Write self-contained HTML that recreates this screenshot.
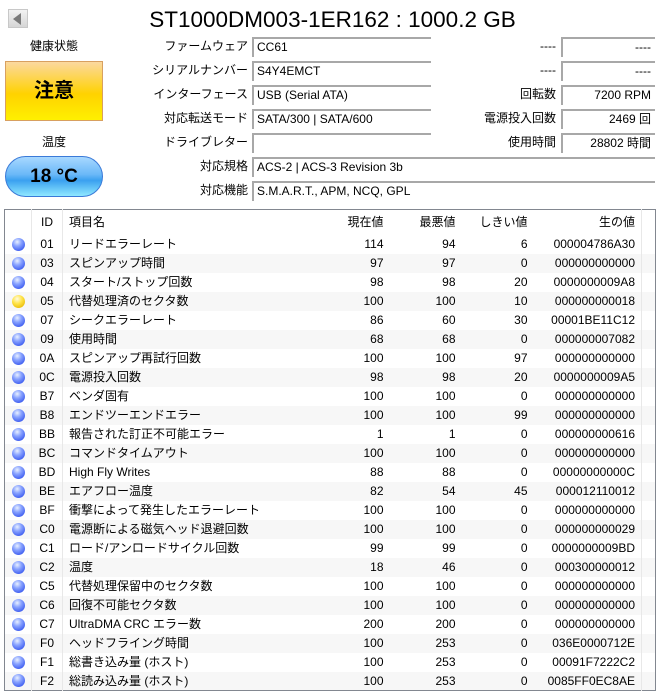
<!DOCTYPE html><html><head><meta charset="utf-8"><style>
*{margin:0;padding:0;box-sizing:border-box}
body{width:661px;height:697px;background:#fff;font-family:"Liberation Sans","Noto Sans CJK JP",sans-serif;color:#000;position:relative;overflow:hidden;font-size:12px}
.a{position:absolute}
.lbl{position:absolute;text-align:right;font-size:12px;line-height:19px}
.box{position:absolute;height:20px;border-top:2px solid #a8a8a8;border-left:2px solid #a8a8a8;font-size:12px;line-height:17px;padding-left:3px;background:#fff}
.r{text-align:right;padding-right:4px}
table{position:absolute;left:4px;top:209px;width:652px;border:1px solid #828790;border-collapse:collapse;font-size:12px}
td{height:19px;line-height:18px;padding:0;white-space:nowrap}
tr:nth-child(odd) td{background:#f7f7f7}
tr.h td{height:25px;background:#fff}
td.c1{width:27px;border-right:1px solid #e8e8e8}
td.c2{width:31px;border-right:1px solid #e8e8e8;text-align:center}
td.c3{padding-left:6px}
td.n{text-align:right;width:72px}
td.rw{text-align:right;width:114px;padding-right:6px;border-right:1px solid #e8e8e8}
td.e{width:14px}
.dot{display:block;width:13px;height:13px;border-radius:50%;margin-left:7px;background:radial-gradient(circle at 40% 30%,#e8f0ff 0,#8aa4ff 35%,#3d5cf0 80%,#2a3fd0 100%)}
.y{background:radial-gradient(circle at 40% 30%,#fffbe0 0,#ffe44a 40%,#e8b800 85%,#c89a00 100%)}
</style></head><body>
<div class="a" style="left:8px;top:9px;width:20px;height:19px;background:linear-gradient(#f2f2f2,#d6d6d6);border:1px solid #c8c8c8"></div>
<div class="a" style="left:13px;top:13px;width:0;height:0;border-top:6px solid transparent;border-bottom:6px solid transparent;border-right:8px solid #7a7a7a"></div>
<div class="a" style="left:0;width:661px;text-align:center;top:5px;font-size:22.5px;line-height:30px;padding-left:4px">ST1000DM003-1ER162 : 1000.2 GB</div>
<div class="a" style="left:5px;width:98px;text-align:center;top:37px;line-height:18px">健康状態</div>
<div class="a" style="left:5px;top:61px;width:98px;height:60px;border:1px solid #d8a060;background:linear-gradient(#fbd8a0 0,#ffd200 55%,#fff000 100%);text-align:center;font-size:20px;font-weight:bold;line-height:58px">注意</div>
<div class="a" style="left:5px;width:98px;text-align:center;top:133px;line-height:18px">温度</div>
<div class="a" style="left:5px;top:156px;width:98px;height:41px;border-radius:21px;border:1px solid #3a7ad8;background:linear-gradient(#a8d8ff 0,#6ab8f8 45%,#3aa0f0 60%,#8fe8ff 100%);text-align:center;font-size:19px;font-weight:bold;line-height:40px">18 °C</div>

<div class="lbl" style="left:120px;width:128px;top:37px">ファームウェア</div>
<div class="lbl" style="left:120px;width:128px;top:61px">シリアルナンバー</div>
<div class="lbl" style="left:120px;width:128px;top:85px">インターフェース</div>
<div class="lbl" style="left:120px;width:128px;top:109px">対応転送モード</div>
<div class="lbl" style="left:120px;width:128px;top:133px">ドライブレター</div>
<div class="lbl" style="left:120px;width:128px;top:157px">対応規格</div>
<div class="lbl" style="left:120px;width:128px;top:181px">対応機能</div>
<div class="box" style="left:252px;top:37px;width:179px">CC61</div>
<div class="box" style="left:252px;top:61px;width:179px">S4Y4EMCT</div>
<div class="box" style="left:252px;top:85px;width:179px">USB (Serial ATA)</div>
<div class="box" style="left:252px;top:109px;width:179px">SATA/300 | SATA/600</div>
<div class="box" style="left:252px;top:133px;width:179px"></div>
<div class="box" style="left:252px;top:157px;width:403px">ACS-2 | ACS-3 Revision 3b</div>
<div class="box" style="left:252px;top:181px;width:403px">S.M.A.R.T., APM, NCQ, GPL</div>
<div class="lbl" style="left:440px;width:116px;top:37px">----</div>
<div class="lbl" style="left:440px;width:116px;top:61px">----</div>
<div class="lbl" style="left:440px;width:116px;top:85px">回転数</div>
<div class="lbl" style="left:440px;width:116px;top:109px">電源投入回数</div>
<div class="lbl" style="left:440px;width:116px;top:133px">使用時間</div>
<div class="box r" style="left:561px;top:37px;width:94px">----</div>
<div class="box r" style="left:561px;top:61px;width:94px">----</div>
<div class="box r" style="left:561px;top:85px;width:94px">7200 RPM</div>
<div class="box r" style="left:561px;top:109px;width:94px">2469 回</div>
<div class="box r" style="left:561px;top:133px;width:94px">28802 時間</div>

<table>
<tr class="h"><td class="c1"></td><td class="c2">ID</td><td class="c3">項目名</td><td class="n">現在値</td><td class="n">最悪値</td><td class="n">しきい値</td><td class="rw">生の値</td><td class="e"></td></tr>
<tr><td class="c1"><i class="dot"></i></td><td class="c2">01</td><td class="c3">リードエラーレート</td><td class="n">114</td><td class="n">94</td><td class="n">6</td><td class="rw">000004786A30</td><td class="e"></td></tr>
<tr><td class="c1"><i class="dot"></i></td><td class="c2">03</td><td class="c3">スピンアップ時間</td><td class="n">97</td><td class="n">97</td><td class="n">0</td><td class="rw">000000000000</td><td class="e"></td></tr>
<tr><td class="c1"><i class="dot"></i></td><td class="c2">04</td><td class="c3">スタート/ストップ回数</td><td class="n">98</td><td class="n">98</td><td class="n">20</td><td class="rw">0000000009A8</td><td class="e"></td></tr>
<tr><td class="c1"><i class="dot y"></i></td><td class="c2">05</td><td class="c3">代替処理済のセクタ数</td><td class="n">100</td><td class="n">100</td><td class="n">10</td><td class="rw">000000000018</td><td class="e"></td></tr>
<tr><td class="c1"><i class="dot"></i></td><td class="c2">07</td><td class="c3">シークエラーレート</td><td class="n">86</td><td class="n">60</td><td class="n">30</td><td class="rw">00001BE11C12</td><td class="e"></td></tr>
<tr><td class="c1"><i class="dot"></i></td><td class="c2">09</td><td class="c3">使用時間</td><td class="n">68</td><td class="n">68</td><td class="n">0</td><td class="rw">000000007082</td><td class="e"></td></tr>
<tr><td class="c1"><i class="dot"></i></td><td class="c2">0A</td><td class="c3">スピンアップ再試行回数</td><td class="n">100</td><td class="n">100</td><td class="n">97</td><td class="rw">000000000000</td><td class="e"></td></tr>
<tr><td class="c1"><i class="dot"></i></td><td class="c2">0C</td><td class="c3">電源投入回数</td><td class="n">98</td><td class="n">98</td><td class="n">20</td><td class="rw">0000000009A5</td><td class="e"></td></tr>
<tr><td class="c1"><i class="dot"></i></td><td class="c2">B7</td><td class="c3">ベンダ固有</td><td class="n">100</td><td class="n">100</td><td class="n">0</td><td class="rw">000000000000</td><td class="e"></td></tr>
<tr><td class="c1"><i class="dot"></i></td><td class="c2">B8</td><td class="c3">エンドツーエンドエラー</td><td class="n">100</td><td class="n">100</td><td class="n">99</td><td class="rw">000000000000</td><td class="e"></td></tr>
<tr><td class="c1"><i class="dot"></i></td><td class="c2">BB</td><td class="c3">報告された訂正不可能エラー</td><td class="n">1</td><td class="n">1</td><td class="n">0</td><td class="rw">000000000616</td><td class="e"></td></tr>
<tr><td class="c1"><i class="dot"></i></td><td class="c2">BC</td><td class="c3">コマンドタイムアウト</td><td class="n">100</td><td class="n">100</td><td class="n">0</td><td class="rw">000000000000</td><td class="e"></td></tr>
<tr><td class="c1"><i class="dot"></i></td><td class="c2">BD</td><td class="c3">High Fly Writes</td><td class="n">88</td><td class="n">88</td><td class="n">0</td><td class="rw">00000000000C</td><td class="e"></td></tr>
<tr><td class="c1"><i class="dot"></i></td><td class="c2">BE</td><td class="c3">エアフロー温度</td><td class="n">82</td><td class="n">54</td><td class="n">45</td><td class="rw">000012110012</td><td class="e"></td></tr>
<tr><td class="c1"><i class="dot"></i></td><td class="c2">BF</td><td class="c3">衝撃によって発生したエラーレート</td><td class="n">100</td><td class="n">100</td><td class="n">0</td><td class="rw">000000000000</td><td class="e"></td></tr>
<tr><td class="c1"><i class="dot"></i></td><td class="c2">C0</td><td class="c3">電源断による磁気ヘッド退避回数</td><td class="n">100</td><td class="n">100</td><td class="n">0</td><td class="rw">000000000029</td><td class="e"></td></tr>
<tr><td class="c1"><i class="dot"></i></td><td class="c2">C1</td><td class="c3">ロード/アンロードサイクル回数</td><td class="n">99</td><td class="n">99</td><td class="n">0</td><td class="rw">0000000009BD</td><td class="e"></td></tr>
<tr><td class="c1"><i class="dot"></i></td><td class="c2">C2</td><td class="c3">温度</td><td class="n">18</td><td class="n">46</td><td class="n">0</td><td class="rw">000300000012</td><td class="e"></td></tr>
<tr><td class="c1"><i class="dot"></i></td><td class="c2">C5</td><td class="c3">代替処理保留中のセクタ数</td><td class="n">100</td><td class="n">100</td><td class="n">0</td><td class="rw">000000000000</td><td class="e"></td></tr>
<tr><td class="c1"><i class="dot"></i></td><td class="c2">C6</td><td class="c3">回復不可能セクタ数</td><td class="n">100</td><td class="n">100</td><td class="n">0</td><td class="rw">000000000000</td><td class="e"></td></tr>
<tr><td class="c1"><i class="dot"></i></td><td class="c2">C7</td><td class="c3">UltraDMA CRC エラー数</td><td class="n">200</td><td class="n">200</td><td class="n">0</td><td class="rw">000000000000</td><td class="e"></td></tr>
<tr><td class="c1"><i class="dot"></i></td><td class="c2">F0</td><td class="c3">ヘッドフライング時間</td><td class="n">100</td><td class="n">253</td><td class="n">0</td><td class="rw">036E0000712E</td><td class="e"></td></tr>
<tr><td class="c1"><i class="dot"></i></td><td class="c2">F1</td><td class="c3">総書き込み量 (ホスト)</td><td class="n">100</td><td class="n">253</td><td class="n">0</td><td class="rw">00091F7222C2</td><td class="e"></td></tr>
<tr><td class="c1"><i class="dot"></i></td><td class="c2">F2</td><td class="c3">総読み込み量 (ホスト)</td><td class="n">100</td><td class="n">253</td><td class="n">0</td><td class="rw">0085FF0EC8AE</td><td class="e"></td></tr>
</table>
</body></html>
